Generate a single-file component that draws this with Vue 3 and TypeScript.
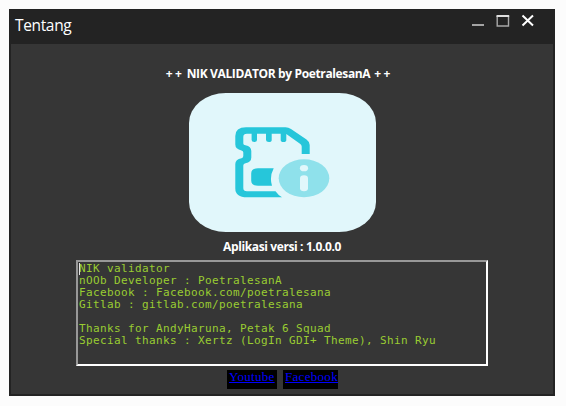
<script setup lang="ts">
interface Link {
  label: string
  href: string
}

const title: string = 'Tentang'
const heading: string = 'NIK VALIDATOR by PoetralesanA'
const version: string = 'Aplikasi versi : 1.0.0.0'
const credits: string = [
  'NIK validator',
  'nOOb Developer : PoetralesanA',
  'Facebook : Facebook.com/poetralesana',
  'Gitlab : gitlab.com/poetralesana',
  '',
  'Thanks for AndyHaruna, Petak 6 Squad',
  'Special thanks : Xertz (LogIn GDI+ Theme), Shin Ryu',
].join('\n')
const links: Link[] = [
  { label: 'Youtube', href: '#youtube' },
  { label: 'Facebook', href: '#facebook' },
]
</script>

<template>
  <div class="desktop">
    <main class="window">
      <header class="titlebar">
        <span class="title">{{ title }}</span>
        <svg class="controls" width="66" height="16" viewBox="0 0 66 16">
          <rect x="2" y="10" width="12" height="2" fill="#a3a3a3" />
          <path d="M27.200 2V12H38.500V2" fill="none" stroke="#a8a8a8" stroke-width="1.400" />
          <path d="M26.500 2H39.200" stroke="#dedede" stroke-width="2" />
          <path d="M52.500 1.500L63 11.500M63 1.500L52.500 11.500" stroke="#fff" stroke-width="2" />
        </svg>
      </header>
      <section class="content">
        <h1 class="heading">
          <span class="plus">++</span>
          <span>{{ heading }}</span>
          <span class="plus">++</span>
        </h1>
        <svg class="logo" width="187" height="139" viewBox="189 93 187 139">
          <rect x="189" y="93" width="187" height="139" rx="37" ry="30" fill="#e1f7fb" />
          <path
            fill="#26c6da"
            d="M246 127.300H285.500Q288.500 127.300 291 129L306.500 139.500Q309.700 141.800 309.700 145V154H301.700V146.500Q301.700 145 300 143.800L286.300 134V140Q286.300 142 283.500 142T280.700 140V133.700H271.700V140Q271.700 142 268.900 142T266 140V133.700H257V140Q257 142 254.300 142T251.600 140V133.700H247Q243.300 133.700 243.300 137V143.500Q243.300 145 245.500 145.300Q251.300 146.500 251.300 151V157.500Q251.300 162 245.500 163.200Q243.300 163.700 243.300 165.500V188Q243.300 191.300 247 191.300H275.500Q278 195 282 197.300H247Q235.300 197.300 235.300 188.500V164Q235.300 159.500 241.500 158.200Q243.300 157.700 243.300 156V152.500Q243.300 150.800 241.500 150.400Q235.300 149 235.300 144.500V136Q235.300 127.300 246 127.300Z"
          />
          <path fill="#26c6da" d="M258 168.300H273.700Q269.200 177 272 185.800H258Q251.200 185.800 251.200 180.500V173.500Q251.200 168.300 258 168.300Z" />
          <ellipse cx="304" cy="178.300" rx="25.300" ry="19" fill="#8fe1eb" />
          <ellipse cx="304" cy="168.200" rx="4.100" ry="3.100" fill="#e1f7fb" />
          <rect x="300" y="175.300" width="8" height="16" rx="4" ry="3" fill="#e1f7fb" />
        </svg>
        <p class="version">{{ version }}</p>
        <div class="credits"><span class="caret"></span>{{ credits }}</div>
        <nav class="links">
          <a v-for="link in links" :key="link.label" :href="link.href">{{ link.label }}</a>
        </nav>
      </section>
    </main>
  </div>
</template>

<style>
body {
  background: #fcfcfc;
}
</style>

<style scoped>
.desktop {
  box-sizing: border-box;
  width: 566px;
  height: 406px;
  padding: 9px;
  background: #fcfcfc;
}
.window {
  box-sizing: border-box;
  width: 546px;
  height: 387px;
  border: 2px solid #232323;
  background: #363636;
  font-family: 'Open Sans', 'Noto Sans', sans-serif;
  color: #fff;
}
.titlebar {
  display: flex;
  justify-content: space-between;
  height: 33px;
  padding: 0 17px 0 4px;
  background: #232323;
}
.title {
  font-size: 15.5px;
  line-height: 29px;
  letter-spacing: -0.35px;
}
.controls {
  margin-top: 3px;
}
.content {
  display: flex;
  flex-direction: column;
  align-items: center;
}
.heading,
.version {
  margin: 0;
  font-size: 12px;
  font-weight: 700;
  line-height: 16px;
  white-space: pre;
}
.heading {
  display: flex;
  gap: 4px;
  margin-top: 22px;
  margin-right: 7px;
  letter-spacing: -0.36px;
}
.plus {
  width: 17px;
  letter-spacing: 2.3px;
}
.logo {
  display: block;
  margin-top: 11px;
  margin-left: 1px;
}
.version {
  margin-top: 7px;
  letter-spacing: -0.38px;
}
.credits {
  position: relative;
  box-sizing: border-box;
  width: 412px;
  height: 106px;
  margin-top: 5px;
  padding: 1px;
  border: 2px solid;
  border-color: #989898 #fff #fff #989898;
  color: #9acd32;
  font-family: 'DejaVu Sans Mono', monospace;
  font-size: 11px;
  letter-spacing: 0.378px;
  line-height: 12px;
  white-space: pre;
}
.caret {
  position: absolute;
  left: 1px;
  top: 1px;
  width: 1px;
  height: 12px;
  background: #e4e4e4;
}
.links {
  display: flex;
  gap: 6px;
  margin-top: 4px;
  margin-left: 1px;
}
.links a {
  box-sizing: border-box;
  height: 19px;
  padding: 0 2px;
  background: #000;
  color: #00f;
  font-family: 'Liberation Serif', serif;
  font-size: 13px;
  letter-spacing: 0.3px;
  line-height: 14px;
  text-decoration-skip-ink: none;
}
.links a:first-child {
  width: 50px;
}
.links a:last-child {
  width: 55px;
}
</style>
